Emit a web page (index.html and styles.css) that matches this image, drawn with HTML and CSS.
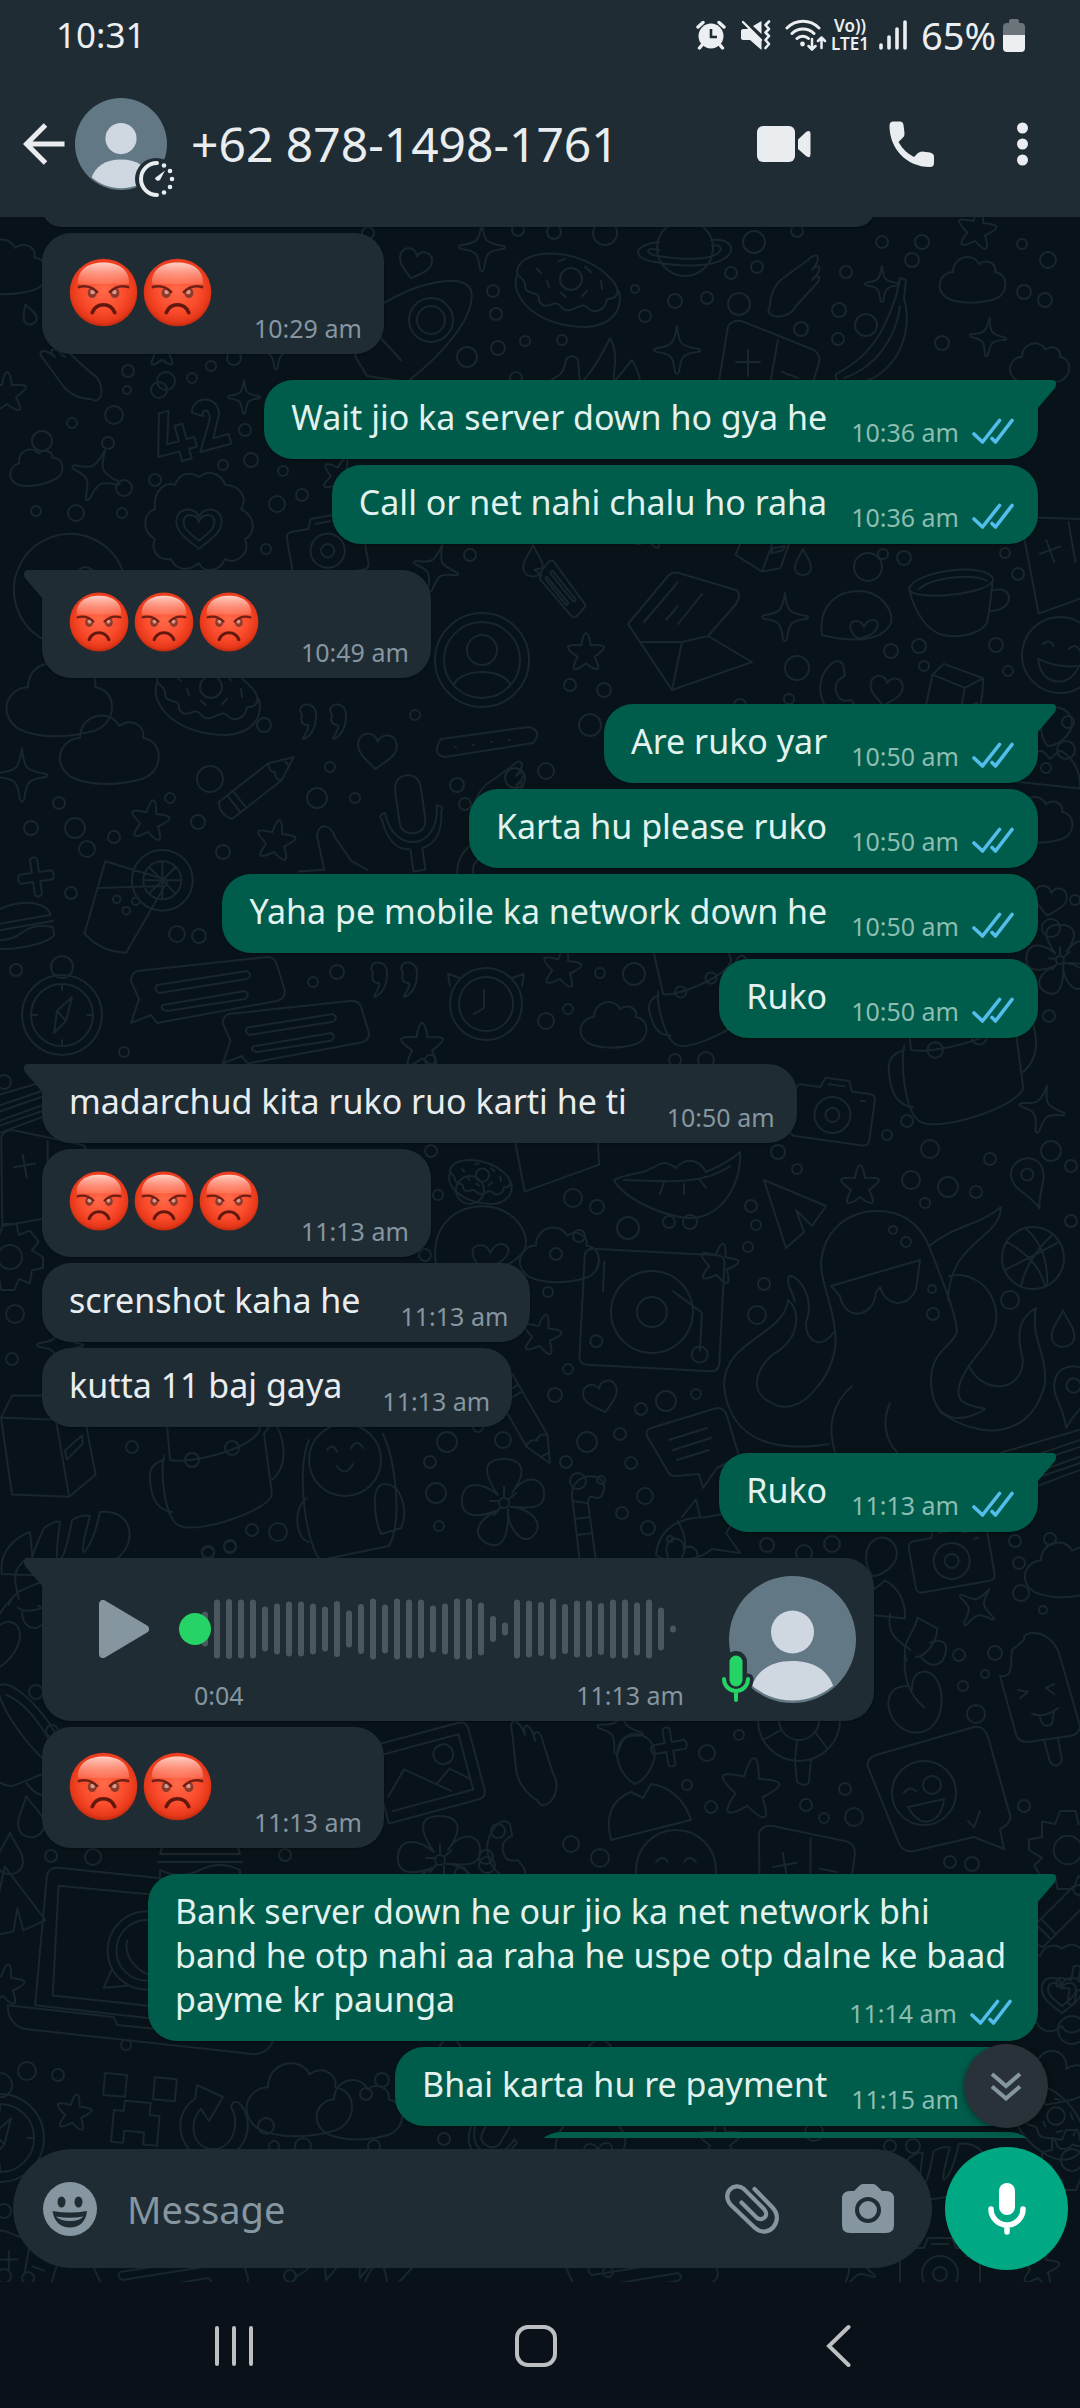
FILE: index.html
```
<!DOCTYPE html>
<html lang="en">
<head>
<meta charset="utf-8">
<meta name="viewport" content="width=device-width, initial-scale=1">
<title>+62 878-1498-1761</title>
<link rel="stylesheet" href="styles.css">
</head>
<body>
<svg class="sprite" aria-hidden="true">
  <defs>
    <radialGradient id="face" cx="50%" cy="46%" r="54%">
      <stop offset="0" stop-color="#ff6a4a"/>
      <stop offset="0.6" stop-color="#fa4c2c"/>
      <stop offset="0.88" stop-color="#e8381a"/>
      <stop offset="1" stop-color="#c02a0e"/>
    </radialGradient>
    <linearGradient id="shine" x1="0" y1="0" x2="0" y2="1">
      <stop offset="0" stop-color="#ffd9d0" stop-opacity="0.95"/>
      <stop offset="1" stop-color="#ff9a84" stop-opacity="0.35"/>
    </linearGradient>
    <symbol id="angry" viewBox="0 0 69 70">
      <circle cx="34.500" cy="35" r="34.300" fill="url(#face)"/>
      <path d="M8.500 25C8.500 11 20 4.500 34.500 4.500S60.500 11 60.500 25C60.500 28 52 26 34.500 26S8.500 28 8.500 25Z" fill="url(#shine)"/>
      <ellipse cx="23" cy="35.500" rx="4.600" ry="5.200" fill="#8b3a2c"/>
      <ellipse cx="46" cy="35.500" rx="4.600" ry="5.200" fill="#8b3a2c"/>
      <circle cx="23.500" cy="34.500" r="2.400" fill="#d99a8c"/>
      <circle cx="45.500" cy="34.500" r="2.400" fill="#d99a8c"/>
      <path d="M9.500 29.500C17 27.500 23 29.500 28 34.500M59.500 29.500C52 27.500 46 29.500 41 34.500" fill="none" stroke="#6e2016" stroke-width="2.600" stroke-linecap="round"/>
      <path d="M23 55.500C25.500 49.500 30 47.500 34.500 47.500S43.500 49.500 46 55.500" fill="none" stroke="#64170d" stroke-width="3.600" stroke-linecap="round"/>
    </symbol>
    <symbol id="ticks" viewBox="0 0 42 27">
      <path d="M2 16L10.500 24L27.500 2.500M20 20.500L23.500 24L40 2.500" fill="none" stroke="#53bdeb" stroke-width="3.600" stroke-linecap="round" stroke-linejoin="round"/>
    </symbol>
    <symbol id="person" viewBox="0 0 127 127">
      <clipPath id="disc"><circle cx="63.500" cy="61.500" r="63"/></clipPath>
      <circle cx="63.500" cy="63.500" r="63.500" fill="#637885"/>
      <circle cx="63.500" cy="56" r="21.500" fill="#cfd8e0"/>
      <path clip-path="url(#disc)" d="M22 112C28 94 42 85 63.500 85S99 94 105 112V127H22Z" fill="#cfd8e0"/>
    </symbol>
  </defs>
</svg>

<header class="top">
  <div class="status">
    <time class="clock">10:31</time>
    <svg class="alarm" viewBox="0 0 30 30" width="30" height="30" role="img" aria-label="Alarm"><circle cx="15" cy="16" r="12.500" fill="#eceff1"/><path d="M2 7L7 2.500M28 7L23 2.500M6 25L3.500 28M24 25L26.500 28" stroke="#eceff1" stroke-width="3.400" stroke-linecap="round"/><path d="M15 9V17H21" fill="none" stroke="#1f2c34" stroke-width="2.600"/></svg>
    <svg class="mute" viewBox="0 0 30 30" width="30" height="30" role="img" aria-label="Vibrate"><path d="M0 11C0 10 1 9 2 9H6L8 8L20.500 20V30L9 20H2C1 20 0 19 0 18ZM20.500 1V14L12 6Z" fill="#eceff1"/><path d="M2 2L20 20" stroke="#eceff1" stroke-width="2.400" stroke-linecap="round"/><path d="M28 1.500L24.500 5L28 9L24.500 12.500L28 16L24.500 20L28 24L24.500 28" fill="none" stroke="#eceff1" stroke-width="2.600" stroke-linecap="round" stroke-linejoin="round"/></svg>
    <svg class="wifi" viewBox="0 0 42 32" width="42" height="32" role="img" aria-label="Wi-Fi"><g fill="none" stroke="#eceff1" stroke-width="3" stroke-linecap="round" stroke-linejoin="round"><path d="M2 9C11 0 25 0 34 9M7 14.500C13 8.500 23 8.500 29 14.500M12 19.500C15 16.500 20.500 16.500 23.500 19.500"/><path d="M27 20V30M23.500 27L27 30.500L30.500 27M36.500 29V19M33 22L36.500 18.500L40 22" stroke-width="2.500"/></g><circle cx="17.500" cy="25" r="2.400" fill="#eceff1"/></svg>
    <span class="volte">Vo))<br>LTE1</span>
    <svg class="signal" viewBox="0 0 28 30" width="28" height="30" role="img" aria-label="Signal"><path d="M2 25V28M10 17V28M18 9V28M26 2V28" stroke="#eceff1" stroke-width="3.600" stroke-linecap="round"/></svg>
    <span class="charge">65%</span>
    <svg class="battery" viewBox="0 0 22 33" width="22" height="33" role="img" aria-label="Battery"><path d="M6 4V2Q6 0 8 0H14Q16 0 16 2V4H18Q22 4 22 8V16H0V8Q0 4 4 4Z" fill="#6b7478"/><path d="M0 16H22V29Q22 33 18 33H4Q0 33 0 29Z" fill="#eceff1"/></svg>
  </div>
  <div class="toolbar">
    <button class="icon back" type="button" aria-label="Back"><svg viewBox="0 0 42 42" width="42" height="42"><path d="M41.500 21H4M22.500 2L3.500 21L22.500 40" fill="none" stroke="#e9edef" stroke-width="5"/></svg></button>
    <div class="avatar">
      <svg width="92" height="92" viewBox="0 0 127 127" role="img" aria-label="Contact photo"><use href="#person"/></svg>
      <svg class="timer" viewBox="0 0 42 42" width="42" height="42" aria-hidden="true"><circle cx="21" cy="21" r="21" fill="#1f2c34"/><path d="M22 5A16 16 0 1 0 22 37" fill="none" stroke="#e9edef" stroke-width="4" stroke-linecap="round"/><g fill="#e9edef"><circle cx="29" cy="7.500" r="2.300"/><circle cx="35" cy="13" r="2.300"/><circle cx="37" cy="21" r="2.300"/><circle cx="35" cy="29" r="2.300"/><circle cx="29" cy="34.500" r="2.300"/><path d="M30 12.500L25 22A3 3 0 0 1 20 20Z"/></g></svg>
    </div>
    <h1 class="title">+62 878-1498-1761</h1>
    <button class="icon video" type="button" aria-label="Video call"><svg viewBox="0 0 54 36" width="54" height="36"><rect width="38" height="36" rx="6" fill="#e9edef"/><path d="M41 13.500L49 6Q53.500 3 53.500 8V28Q53.500 33 49 30L41 23Z" fill="#e9edef"/></svg></button>
    <button class="icon call" type="button" aria-label="Call"><svg viewBox="0 0 45 46" width="45" height="46"><path d="M4 0.500H11Q14 0.500 14.500 4L15.500 12Q16 15 13.500 17L9.500 21Q15 31 25 36L29 32Q31 30.500 33 30.500L41 31.500Q45 32.500 45 35.500V42Q45 46 41 46C17 46 0.500 27 0.500 5Q0.500 0.500 4 0.500Z" fill="#e9edef"/></svg></button>
    <button class="icon more" type="button" aria-label="More options"><svg viewBox="0 0 11 44" width="11" height="44"><g fill="#e9edef"><circle cx="5.500" cy="6" r="5.500"/><circle cx="5.500" cy="22" r="5.500"/><circle cx="5.500" cy="38" r="5.500"/></g></svg></button>
  </div>
</header>

<main class="conversation">
  <svg class="wallpaper" viewBox="0 217 1080 2065" preserveAspectRatio="xMidYMin slice" aria-hidden="true"></svg>

  <section class="chat" aria-label="Messages">
    <ol class="messages">
      <li class="received"><div class="bubble earlier"></div></li>
      <li class="received"><div class="bubble"><p class="emoji big"><svg role="img" aria-label="Angry face"><use href="#angry"/></svg><svg role="img" aria-label="Angry face"><use href="#angry"/></svg></p><span class="meta"><time>10:29 am</time></span></div></li>

      <li class="sent first"><div class="bubble"><p>Wait jio ka server down ho gya he</p><span class="meta"><time>10:36 am</time><svg class="ticks"><use href="#ticks"/></svg></span></div></li>
      <li class="sent"><div class="bubble"><p>Call or net nahi chalu ho raha</p><span class="meta"><time>10:36 am</time><svg class="ticks"><use href="#ticks"/></svg></span></div></li>

      <li class="received first"><div class="bubble"><p class="emoji"><svg role="img" aria-label="Angry face"><use href="#angry"/></svg><svg role="img" aria-label="Angry face"><use href="#angry"/></svg><svg role="img" aria-label="Angry face"><use href="#angry"/></svg></p><span class="meta"><time>10:49 am</time></span></div></li>

      <li class="sent first"><div class="bubble"><p>Are ruko yar</p><span class="meta"><time>10:50 am</time><svg class="ticks"><use href="#ticks"/></svg></span></div></li>
      <li class="sent"><div class="bubble"><p>Karta hu please ruko</p><span class="meta"><time>10:50 am</time><svg class="ticks"><use href="#ticks"/></svg></span></div></li>
      <li class="sent"><div class="bubble"><p>Yaha pe mobile ka network down he</p><span class="meta"><time>10:50 am</time><svg class="ticks"><use href="#ticks"/></svg></span></div></li>
      <li class="sent"><div class="bubble"><p>Ruko</p><span class="meta"><time>10:50 am</time><svg class="ticks"><use href="#ticks"/></svg></span></div></li>

      <li class="received first"><div class="bubble"><p>madarchud kita ruko ruo karti he ti</p><span class="meta"><time>10:50 am</time></span></div></li>
      <li class="received"><div class="bubble"><p class="emoji"><svg role="img" aria-label="Angry face"><use href="#angry"/></svg><svg role="img" aria-label="Angry face"><use href="#angry"/></svg><svg role="img" aria-label="Angry face"><use href="#angry"/></svg></p><span class="meta"><time>11:13 am</time></span></div></li>
      <li class="received"><div class="bubble"><p>screnshot kaha he</p><span class="meta"><time>11:13 am</time></span></div></li>
      <li class="received"><div class="bubble"><p>kutta 11 baj gaya</p><span class="meta"><time>11:13 am</time></span></div></li>

      <li class="sent first"><div class="bubble"><p>Ruko</p><span class="meta"><time>11:13 am</time><svg class="ticks"><use href="#ticks"/></svg></span></div></li>

      <li class="received first"><div class="bubble voice">
        <button class="icon play" type="button" aria-label="Play"><svg viewBox="0 0 50 58" width="50" height="58"><path d="M4 4V54L46 29Z" fill="#8696a0" stroke="#8696a0" stroke-width="8" stroke-linejoin="round"/></svg></button>
        <div class="track">
          <div class="scrub">
            <svg class="wave" viewBox="0 0 474 64" width="474" height="64" aria-hidden="true"></svg>
            <input type="range" min="0" max="100" value="0" aria-label="Playback position">
          </div>
          <div class="times"><span>0:04</span><time>11:13 am</time></div>
        </div>
        <div class="speaker">
          <svg width="127" height="127" viewBox="0 0 127 127" role="img" aria-label="Contact photo"><use href="#person"/></svg>
          <svg class="voicemic" viewBox="0 0 38 58" width="38" height="58" aria-hidden="true"><g fill="none" stroke-linecap="round"><path d="M19 15V33" stroke="#1f2c34" stroke-width="22"/><path d="M7 32A12 12 0 0 0 31 32M19 45V52" stroke="#1f2c34" stroke-width="11"/><path d="M19 15V33" stroke="#25d366" stroke-width="13"/><path d="M7 32A12 12 0 0 0 31 32M19 45V53" stroke="#25d366" stroke-width="4"/></g></svg>
        </div>
      </div></li>
      <li class="received"><div class="bubble"><p class="emoji big"><svg role="img" aria-label="Angry face"><use href="#angry"/></svg><svg role="img" aria-label="Angry face"><use href="#angry"/></svg></p><span class="meta"><time>11:13 am</time></span></div></li>

      <li class="sent first"><div class="bubble long"><p>Bank server down he our jio ka net network bhi band he otp nahi aa raha he uspe otp dalne ke baad payme kr paunga<span class="meta"><time>11:14 am</time><svg class="ticks"><use href="#ticks"/></svg></span></p></div></li>
      <li class="sent"><div class="bubble"><p>Bhai karta hu re payment</p><span class="meta"><time>11:15 am</time><svg class="ticks"><use href="#ticks"/></svg></span></div></li>
      <li class="sent"><div class="bubble later"></div></li>
    </ol>
    <button class="icon jump" type="button" aria-label="Scroll to latest"><svg viewBox="0 0 32 30" width="32" height="30"><path d="M2 3L16 15L30 3M2 15.500L16 27.500L30 15.500" fill="none" stroke="#8696a0" stroke-width="4"/></svg></button>
  </section>

  <form class="composer">
    <div class="field">
      <button class="icon" type="button" aria-label="Emoji"><svg viewBox="0 0 54 54" width="54" height="54"><circle cx="27" cy="27" r="27" fill="#8696a0"/><ellipse cx="18.500" cy="20" rx="4" ry="5.500" fill="#1f2c34"/><ellipse cx="35.500" cy="20" rx="4" ry="5.500" fill="#1f2c34"/><path d="M9.500 29Q27 32 44 29C43 40 36 45.500 27 45.500S11 40 9.500 29Z" fill="#1f2c34"/><path d="M13 34.500Q27 37 40.500 34.500Q36 39 27 39T13 34.500Z" fill="#8696a0"/></svg></button>
      <input class="text" type="text" placeholder="Message" aria-label="Message">
      <button class="icon attach" type="button" aria-label="Attach"><svg viewBox="0 0 54 50" width="54" height="50"><path d="M29.500 5L47.500 23.500C60 37 43 56 29.500 43.500L5.500 20.500C-4 9 9 -3 19 5L39 25C45 32 37 38 31.500 33.500L16.500 18.500" fill="none" stroke="#8696a0" stroke-width="4.200" stroke-linecap="round"/></svg></button>
      <button class="icon camera" type="button" aria-label="Camera"><svg viewBox="0 0 52 49" width="52" height="49"><path d="M17 2Q19 0 21 0H31Q33 0 35 2L40 7H44Q52 7 52 15V41Q52 49 44 49H8Q0 49 0 41V15Q0 7 8 7H12Z" fill="#8696a0"/><circle cx="26" cy="26" r="11" fill="#8696a0" stroke="#1f2c34" stroke-width="4"/></svg></button>
    </div>
    <button class="icon record" type="button" aria-label="Record voice message"><svg viewBox="0 0 38 54" width="38" height="54"><path d="M19 9V25" stroke="#fff" stroke-width="16" stroke-linecap="round"/><path d="M3 27A16 16 0 0 0 35 27M19 43V50" fill="none" stroke="#fff" stroke-width="5.500" stroke-linecap="round"/></svg></button>
  </form>
</main>

<nav class="system" aria-label="System">
  <button class="icon" type="button" aria-label="Recents"><svg viewBox="0 0 40 42" width="40" height="42"><path d="M3 3V39M20 3V39M37 3V39" stroke="#bdbfc1" stroke-width="4" stroke-linecap="round"/></svg></button>
  <button class="icon" type="button" aria-label="Home"><svg viewBox="0 0 42 42" width="42" height="42"><rect x="2" y="2" width="38" height="38" rx="11" fill="none" stroke="#bdbfc1" stroke-width="4"/></svg></button>
  <button class="icon" type="button" aria-label="Back"><svg viewBox="0 0 26 44" width="26" height="44"><path d="M23.500 3L4 22L23.500 41" fill="none" stroke="#bdbfc1" stroke-width="4" stroke-linecap="round"/></svg></button>
</nav>
<script src="chat.js"></script>
</body>
</html>
```
FILE: styles.css
```
* { box-sizing: border-box; }

body {
  margin: 0;
  height: 100vh;
  display: flex;
  flex-direction: column;
  overflow: hidden;
  background: #071318;
  color: #e9edef;
  font-family: "Noto Sans", "Open Sans", sans-serif;
}

svg { display: block; flex: none; }
.sprite { position: absolute; width: 0; height: 0; }

.icon {
  display: flex;
  align-items: center;
  justify-content: center;
  flex: none;
  margin: 0;
  padding: 0;
  border: 0;
  background: none;
}

/* Header */
.top { flex: none; background: #1f2c34; }

.status {
  display: flex;
  align-items: center;
  height: 70px;
  padding: 0 55px 0 56px;
  color: #eceff1;
}
.clock { flex: 1; font-size: 35px; line-height: 44px; }
.mute { margin-left: 15px; }
.wifi { margin-left: 14px; }
.volte {
  margin: 0 10px 0 4px;
  font-size: 17px;
  font-weight: 600;
  line-height: 18px;
  text-align: center;
}
.charge { margin: 0 7px 0 14px; font-size: 38px; line-height: 44px; }

.toolbar {
  display: flex;
  align-items: center;
  min-height: 147px;
  padding: 0 52px 0 23px;
}
.avatar { position: relative; margin: 0 24px 0 10px; }
.timer { position: absolute; right: -10px; bottom: -10px; }
.title {
  flex: 1;
  margin: 0;
  font-size: 48px;
  font-weight: 400;
  line-height: 60px;
  white-space: nowrap;
}
.call { margin: 0 83px 0 78px; }

/* Conversation */
.conversation {
  position: relative;
  flex: 1;
  min-height: 0;
  display: flex;
  flex-direction: column;
}
.wallpaper {
  position: absolute;
  inset: 0;
  width: 100%;
  height: 100%;
  fill: none;
  stroke: #19262c;
  stroke-width: 2;
  stroke-linecap: round;
  stroke-linejoin: round;
}
.wallpaper path { vector-effect: non-scaling-stroke; }

.chat { position: relative; flex: 1; min-height: 0; overflow: hidden; }
.messages {
  display: flex;
  flex-direction: column;
  gap: 6px;
  margin: 0;
  padding: 0 42px;
  list-style: none;
}
.messages li { display: flex; }
.sent { justify-content: flex-end; }
.first { margin-top: 20px; }

.bubble {
  position: relative;
  display: flex;
  align-items: flex-end;
  border-radius: 29px;
  background: #1f2c34;
  box-shadow: 0 1px 2px rgba(0, 0, 0, 0.3);
}
.sent .bubble { background: #005c4b; color: #e2f2ee; }
.received.first .bubble { border-top-left-radius: 0; }
.sent.first .bubble { border-top-right-radius: 0; }
.first .bubble::before {
  content: "";
  position: absolute;
  top: 0;
  width: 20px;
  height: 30px;
  background: inherit;
}
.received.first .bubble::before {
  left: -19px;
  clip-path: path("M20 0H4Q-1 1 2 8L20 29Z");
}
.sent.first .bubble::before {
  right: -19px;
  clip-path: path("M0 0H16Q21 1 18 8L0 29Z");
}

.bubble p {
  margin: 0;
  padding: 15px 0 20px 27px;
  font-size: 34px;
  line-height: 44px;
}
.meta {
  display: flex;
  align-items: center;
  gap: 13px;
  padding: 0 22px 14px 40px;
  color: #8696a0;
  font-size: 25px;
  line-height: 24px;
  white-space: nowrap;
}
.sent .meta { padding: 0 24px 14px 24px; color: #8cbdb1; }
.ticks { width: 42px; height: 27px; }

.bubble .emoji { display: flex; gap: 5px; padding: 22px 2px 26px 27px; }
.emoji svg { width: 60px; height: 60px; }
.bubble .big { padding: 25px 2px 27px 27px; }
.big svg { width: 69px; height: 69px; }

/* The time sits at the end of the last line */
.long { display: block; max-width: 890px; }
.bubble.long p { padding-right: 26px; }
.sent .long .meta { float: right; margin-top: 22px; padding: 0; }

.earlier { width: 833px; height: 38px; margin-top: -28px; }
.later { width: 506px; height: 79px; }

/* Voice message */
.voice { align-items: flex-start; padding: 0 18px 0 57px; }
.play { height: 64px; margin: 39px 30px 0 0; }
.track { width: 513px; padding: 39px 0 14px; }
.scrub { display: grid; align-items: center; }
.scrub > * { grid-area: 1 / 1; }
.wave { margin-left: 23px; fill: none; stroke: #4b565e; stroke-width: 6; stroke-linecap: round; }
.scrub input {
  position: relative;
  width: 100%;
  height: 64px;
  margin: 0;
  background: none;
  appearance: none;
}
.scrub input::-webkit-slider-thumb {
  width: 32px;
  height: 32px;
  border-radius: 50%;
  background: #25d366;
  appearance: none;
}
.times {
  display: flex;
  justify-content: space-between;
  margin-top: 22px;
  padding: 0 8px 0 15px;
  color: #8696a0;
  font-size: 25px;
  line-height: 24px;
}
.speaker { position: relative; margin: 18px 0 0 37px; }
.voicemic { position: absolute; left: -12px; bottom: -2px; }

.jump {
  position: absolute;
  right: 32px;
  bottom: 10px;
  width: 84px;
  height: 84px;
  border-radius: 50%;
  background: #293239;
  box-shadow: 0 2px 6px rgba(0, 0, 0, 0.4);
}

/* Composer */
.composer {
  position: relative;
  flex: none;
  display: flex;
  align-items: center;
  gap: 13px;
  padding: 9px 12px 12px 13px;
}
.field {
  flex: 1;
  min-width: 0;
  display: flex;
  align-items: center;
  height: 119px;
  padding: 0 38px 0 30px;
  border-radius: 60px;
  background: #1f2c34;
}
.text {
  flex: 1;
  min-width: 0;
  margin: 0 30px;
  padding: 0;
  border: 0;
  outline: 0;
  background: none;
  color: #e9edef;
  font: 38px/48px "Noto Sans", "Open Sans", sans-serif;
}
.text::placeholder { color: #8696a0; opacity: 1; }
.camera { margin-left: 63px; }
.record {
  width: 123px;
  height: 123px;
  border-radius: 50%;
  background: #00a884;
}

/* System navigation */
.system {
  flex: none;
  display: grid;
  grid-template-columns: repeat(3, 1fr);
  padding: 42px 91px 40px 83px;
  background: #0a1118;
}
.system .icon { height: 44px; }
```
FILE: chat.js
```
// Doodle outlines, drawn around their own centre.
const ring = (x, y, r) => `M${x - r} ${y}a${r} ${r} 0 1 0 ${2 * r} 0a${r} ${r} 0 1 0 ${-2 * r} 0`;
const shapes = {
  heart: "M0 16C-6 10-18 4-16-6C-14-15-3-15 0-7C3-15 14-15 16-6C18 4 6 10 0 16Z",
  star: "M0-20Q3-20 5-7Q19-8 19-5Q19-2 9 5Q15 17 12 18Q9 19 0 12Q-9 19-12 18Q-15 17-9 5Q-19-2-19-5Q-19-8-5-7Q-3-20 0-20Z",
  sparkle: "M0-24C2-6 3-4 22-1C24 0 23 2 20 2C6 4 4 6 2 22C1 25-1 25-2 22C-4 6-6 4-20 2C-24 1-24-1-20-2C-5-4-3-6 0-24Z",
  plus: "M-4-20Q0-24 4-20V-5H18Q22 0 18 5H4V20Q0 24-4 20V5H-18Q-22 0-18-5H-4Z",
  drop: "M0-14C4-5 9-1 8 6C6 14-6 14-8 6C-9-1-4-5 0-14Z",
  cloud: "M-26 18C-40 8-32-8-20-8C-20-24 0-28 6-16C14-22 24-16 22-8C36-6 36 14 22 19C6 24-14 24-26 18Z",
  donut: "M-50-16C-46-40 10-40 40-12C54 0 54 12 40 12C38 24 26 28 20 20C12 14 4 30-6 20C-12 10-22 26-28 14C-26 2-42 10-42-2C-42-10-50-8-50-16ZM-50-12C-58 10-30 40 20 40C46 38 56 22 52 4" + ring(4, -8, 11) + "M-30-18l4 4M-8-26l6-2M18-20l6 5M34-6l1 8M-20-6l2 6M-6 6l5 4M20 4l-5 5",
  planet: ring(0, -2, 28) + "M-26-8C-50-6-56 8-30 12C0 18 30 16 40 8C52 0 46-12 26-10M-26 0C-40-4-40 4-28 6C0 10 22 10 32 4C40-2 34-6 27-4",
  hand: "M-26 22C-34 34-8 38 0 22L22-2C26-8 20-10 16-4C28-16 24-22 16-14C26-26 22-34 12-24L-10-8C-20-2-26 10-26 22Z",
  badge: "M0-46C12-56 24-46 26-38C44-38 48-22 42-14C58-6 56 12 46 16C52 32 36 42 26 36C20 50 4 50 0 40C-12 50-24 46-28 36C-44 38-48 24-44 16C-58 8-56-10-44-14C-46-32-34-42-24-38C-20-50-8-52 0-46ZM0 26C-8 18-26 10-22-6C-18-16-4-16 0-6C4-16 18-16 22-6C26 10 8 18 0 26ZM0 18C-6 12-18 6-15-4C-12-10-2-9 0-1C2-9 12-10 15-4C18 6 6 12 0 18Z",
  camera: "M-34-22H-16L-12-32H12L16-22H34Q40-22 40-16V24Q40 30 34 30H-34Q-40 30-40 24V-16Q-40-22-34-22ZM-8-26H8M26-14H30" + ring(0, 4, 18) + ring(0, 4, 7),
  face: ring(0, 0, 40) + "M-20-8Q-14-16-8-8M8-8Q14-16 20-8M-22 8Q0 14 22 8Q16 28 0 28T-22 8Z",
  user: ring(0, 0, 47) + ring(0, 0, 38) + ring(0, -10, 15) + "M-28 24C-20 8 20 8 28 24",
  clock: ring(0, 0, 36) + ring(0, 0, 27) + "M-2-14V4L-12 10M-26-26L-38-30L-36-18M26-26L38-30L36-18",
  compass: ring(0, 0, 40) + ring(0, 0, 31) + ring(0, -48, 11) + "M10-18L4 6L-8 18L-5-4ZM-5-4L4 6M0-31V-25M0 31V25M-31 0H-25M31 0H25",
  envelope: "M-60-4L-20-52Q-14-58-6-54L48-38Q54-34 48-24L20 8L64 34L-16 62L-48 14ZM-48 14L-6 14L20 8M-6 14L-16 62M-44-6L-10-46M-10-4L14-34M-22-8L-10-22",
  cup: "M-44-16C-40-34 34-44 40-26C42-12-40-2-44-16C-38 8-26 26-10 30C8 34 28 28 34 18C36 8 38-8 40-26M38-14C60-22 64 4 38 6M-34-16C-20-28 20-32 34-24",
  whale: "M-34 18C-38-12-18-26 2-26C26-26 40-4 34 8C24 24-2 26-34 18M2 22C-8 14-8 4 0 4Q6 4 8 10C12 0 22 2 22 8C20 18 8 20 2 22Z",
  phone: "M-12-26C-34-6-20 32 10 30Q18 28 14 18L8 10Q0 12-4 8C-10-2-8-10 2-14L0-26Q-6-32-12-26Z",
  pencil: "M-46-12H24L50 0L24 12H-46Q-54 0-46-12ZM24-12Q18-4 24 0Q18 6 24 12M-34-12V12M-26-12V12M40-5V5",
  mic: "M-13-34Q-13-50 0-50T13-34V-6Q13 8 0 8T-13-6ZM-30-10Q-34-14-26-16C-24 28 24 28 26-16Q34-14 30-10C28 12 20 22 6 24V46H-6V24C-20 22-28 12-30-10Z",
  quotes: "M-22-10C-30-22-8-26-8-10C-8 6-16 12-20 14C-24 14-14 6-16 0C-22 0-24-4-22-10ZM8-10C0-22 22-26 22-10C22 6 14 12 10 14C6 14 16 6 14 0C8 0 6-4 8-10Z",
  drink: "M-26-46L40-26L-4 50Q-30 50-48 30ZM-34-18L34-20" + ring(34, -26, 32) + ring(34, -26, 20) + "M34-46V-6M14-26H54M20-40L48-12M48-40L20-12" + ring(-14, -6, 4) + ring(-4, 6, 4) + ring(6, -4, 4),
  talk: "M-70-22L60-36Q68-36 70-28L78-2Q78 6 70 8L-50 30L-56 22L-76 30L-68 6L-76-12Q-76-20-70-22ZM-50-8L40-22Q46-18 40-14L-48 0Q-54-4-50-8ZM-44 12L38-2Q44 2 38 6L-40 18Q-48 16-44 12Z",
  pill: "M-44-6L44-18Q58-14 48-2L-40 12Q-54 10-44-6M-30 2h1M-12 0h1M6-3h1M24-5h1",
  thumb: "M-40 24L-12 22L-20-16C-18-32-4-28 0-14L18 12L36 22",
  gear: ring(0, 0, 11) + "M-6-30H6L8-20L18-24L26-14L20-6L30 0V10L20 12L18 24L8 20L4 30H-8L-10 20L-20 22L-26 12L-20 6L-30 0V-8L-20-10L-20-22L-10-20Z",
  frame: "M-46-34H38Q46-34 46-26V30Q46 38 38 38H-46ZM-40-24H36V28H-40M-40 14L-20-6L16 24M6 14L20 4L36 18" + ring(18, -10, 9),
  deck: "M-62-58H62Q70-58 70-50V50Q70 58 62 58H-62Q-70 58-70 50V-50Q-70-58-62-58ZM-50-46V-16M20-20L50 0V38" + ring(0, 2, 41) + ring(0, 2, 15) + ring(50, 42, 8) + ring(-54, 34, 6),
  cursor: "M-28-34L34-8L20 12L4-4L12 18L-6 34Z",
  pin: "M0 28C-6 8-18 4-16-12C-12-28 12-28 16-12C18 4 6 8 0 28Z" + ring(0, -8, 6),
  ball: ring(0, 0, 31) + "M-26-16Q6 2 12 28M-28 12Q0-2 26-16M-8-30Q16-10 14 28M-12 28Q-6 0 20-24",
  flower: ring(0, 0, 5) + "M-6-8C-28-40-12-44 0-44S28-38 8-10C22-32 42-24 40-8C40 8 20 4 10 4C36 10 38 26 28 34C18 42 6 26 4 12C4 34-2 48-18 40C-34 30-24 16-8 8C-24 14-44 16-42-4C-40-24-20-20-6-8M0-16V-6M12-10L5-4M14 4H6M4 16V6M-10 12L-4 5M-14-2H-5",
  lips: "M-66 0C-50-8-40-4-24-14C-16-20-10-16-4-12C6-24 20-20 26-8C40-14 52-20 60-28C62 0 44 40 6 38C-24 34-58 16-66 0ZM-56 0C-30 0 20 8 50-14M-16 2L-20 14M4 4V14M20 0L26 8",
  laptop: "M-92-96Q-90-106-78-104L120-84L108 60L-104 36ZM-80-86L110-68L100 46L-86 26L-80-86ZM-132 36L-24 48L-20 56L40 62L44 56L140 66Q138 84 120 86L-116 60Q-132 54-132 36Z" + ring(10, -20, 40) + ring(10, -20, 31) + "M-26 0L-34 18L-10 16M-10-30C-14-14 0 2 16 6",
  invader: "M-36-34H-14V-12H-36ZM14-34H36V-12H14ZM-14-8H12V4H22V34H8V22H-12V34H-24V2H-14Z",
  refresh: "M-18-26C-44-10-34 34 0 34C34 34 44-4 26-22Q20-26 18-18C28-2 20 24 0 24C-20 24-26-2-12-16L-4-4L10-28L-16-40Z",
  carton: "M-40-24L-30-44L30-44L36-24L46 28L22 48L-30 46ZM-40-24L10-22L22 48M10-22L30-44M18 6L34-8V0L20 14Z",
  bag: "M-46-70L44-66L50-30C40-10-20 4-40 0ZM-46-4C-50 10-46 60-30 66C-10 74 60 50 62 34L54-26M-46 0Q-62 4-60 20Q-58 50-38 52M54-26Q66-46 72-20T62 20" + ring(-18, 0, 7) + ring(22, -12, 7),
  child: ring(0, -30, 36) + "M-36-50C-50-20-38 60-24 70L44 56C58 30 50-30 38-56M-18-40Q-12-48-8-38M6-42Q12-52 18-42M-8-24Q0-12 8-26M40-6C24-6 30 30 36 44L56 38C64 20 56-6 40-6M-38 8C-54 20-48 50-36 52",
  bread: "M-66 44C-70 20-50 6-38 2Q-34 40-36 34T-24-2Q-12-10-8-8Q-14 36-8 30T4-10Q14-16 22-14Q10 30 18 20T32-18C54-20 66-6 60 14C50 40 10 48-66 44Z",
  chat: "M-44-24L22-44Q30-44 32-36L44 4L22 16L8 36L4 22L-20 24Q-26 24-28 18L-48-16Q-50-22-44-24ZM-26-12L12-24M-22-2L16-14M-18 8L14-2",
  cane: "M-10 40L-18-28C-18-52 16-52 14-34Q12-22 4-26Q-2-28-2-20L6 38M-18-22L-3-20M-15-4L0-6M-13 12L3 10",
  fish: "M-40 22C-38-2-20-16 10-16L44-22L30 0L44 20L16 16C0 30-30 30-40 22ZM-14-16L0-34L4-16M-18-12Q-6 10-14 24" + ring(-26, 6, 3),
  ice: "M-24-40L-12-50C-14-60 10-62 22-40L44 36Q44 44 34 46L-8 52Q-18 52-20 44L-36-14C-22-12-26-26-24-40M8 50L14 72Q22 80 26 70L22 48M-18 0L-8 2L-16 8M18-6L10-2L18 4M-4 24Q10 28 22 18M4 26Q6 40 16 34L18 22",
  wink: "M-58-38L40-66Q50-68 54-56L76 22Q78 30 66 36L70 56L40 44L-20 58Q-32 60-36 48L-66-26Q-68-34-58-38Z" + ring(-10, 0, 32) + ring(-2, -8, 9) + "M-30 0Q-24-8-18-2M-26 14L10 6Q8 24-4 28T-26 14M34 28L40 34L46 18",
  sprout: "M-6 12C-14-8 4-20 6-36L28-24C28-8 14 8 4 8M-24-40C-30-14-10-8-2 0M20-8C34-14 44-8 34 12C26 20 16 16 10 8M-8 4C-10 30-4 50 14 64M-6 40C-40 40-28 92 6 92C40 90 40 30 16 24C2 24 0 34 0 44",
  float: ring(0, 0, 41) + ring(0, 0, 20) + "M-36 20L-18 10M-2 20L-4 41M16 12L28 28M-4 41L-2 62Q6 68 10 62L12 40",
  bust: "M-18-20C-18-50 18-48 20-22C18-4 6 6 0 8C-8 4-16-6-18-20ZM-4 16L8 22L16 8C34 10 50 24 56 44L-24 64C-30 40-24 24-4 16Z",
  burger: "M-40-6C-36-34 36-34 40-6ZM-42 2H42M-40 10Q-20 20 0 10T40 10V20Q30 28 0 28T-40 20Z",
  flame: "M-54 36C-40 0-34 24-28-4C-26-8-20-10-16-4L-14 20C0 6 8-10 16-26C26-8 18 8 20 18L38-4C46 8 48 22 48 36",
  banana: "M-52 40C-20 24-4 0 8-38L12-56L18-54L16-36C28 6 0 52-42 50Q-54 48-52 40ZM-44 44C-14 34 8 6 12-28",
  sheet: "M-36-44Q-30-52-20-48L50-20Q58-14 54-4L36 54H-52ZM-16-20V6M-28-8H-4M14-30L6 14M18 2L34 8",
  rocket: "M-48-10C-10-34 36-44 44-26C50 0 14 40-20 66L-60 60L-72 40ZM-52 16L-26 44" + ring(4, 4, 22) + ring(4, 4, 14),
  number: "M-30 20H-8V30H2V20H10V10H2V-6H-6V10H-18L-8-22H-18ZM14-14C18-30 44-26 40-6L28 16H44V26H12L30-4C32-14 24-16 24-8Z",
  octopus: "M835 1331C832 1300 821 1285 821 1263C824 1228 850 1211 877 1211C903 1211 920 1225 929 1246C942 1280 955 1310 957 1331C955 1345 931 1350 931 1380C932 1430 970 1420 985 1409C970 1405 950 1405 962 1378C975 1350 1000 1340 996 1310C990 1280 965 1272 949 1276M929 1246C955 1225 980 1225 1001 1207C1000 1240 950 1240 948 1300M835 1331C838 1350 830 1372 818 1386C800 1410 781 1410 770 1402C745 1390 760 1360 780 1350C800 1335 800 1310 788 1300C785 1335 724 1340 724 1385C728 1430 760 1455 829 1444M835 1331C820 1352 805 1340 806 1322C815 1300 800 1275 789 1276C786 1285 792 1290 795 1302M940 1412C980 1440 1030 1440 1045 1384C1047 1350 1030 1340 1036 1308C1015 1320 1018 1340 1023 1360C1022 1392 985 1395 970 1368M852 1386C830 1405 828 1430 835 1452M890 1403C882 1420 885 1440 897 1452M831 1286L920 1260L916 1290C905 1310 885 1305 880 1287L876 1292C874 1318 845 1322 840 1296Z" + ring(893, 1230, 4) + ring(906, 1242, 5) + ring(933, 1314, 6) + ring(932, 1289, 4)
};

// name, x, y, scale, rotation
const placed = `rocket 427 316 1 0|heart 415 263 1 15|sparkle 482 247 1 0|donut 567 287 1 0|planet 685 250 1 0|hand 796 284 1 0|sparkle 882 284 .75 0|cloud 973 280 1 0|
banana 888 334 1 0|sparkle 988 337 .8 5|sheet 764 370 1 0|sparkle 677 350 1 0|flame 594 364 1 0|cloud 1040 364 .9 0|star 977 229 1 10|hand 69 373 1 -90|number 182 430 1 -15|sparkle 244 397 .7 0|sparkle 96 475 1.1 20|cloud 36 467 .8 -10|badge 199 523 1 0|camera 327 547 .95 -10|
sparkle 436 568 1 15|user 482 660 1 0|face 70 590 1.4 -20|star 7 392 1 0|cloud 8 267 1.2 0|drop 29 315 .8 -20|star 340 475 .9 20|star 162 350 .8 0|sparkle 276 350 .8 0|drop 533 562 1.2 0|talk 380 500 .6 0|
envelope 688 628 1 0|sparkle 785 617 1 0|whale 856 617 1 0|cup 953 605 1 0|face 1060 655 .95 10|sheet 1066 552 .9 -20|star 586 652 .95 0|phone 843 690 1 0|heart 886 690 1 10|carton 953 700 .7 20|drop 803 563 1 0|carton 765 540 .6 30|star 650 530 .9 10|talk 560 590 .4 60|
star 562 967 1 10|cloud 614 1025 1 0|bag 695 990 .8 -8|sparkle 22 775 1.1 0|cloud 60 700 1.6 0|cloud 110 750 1.5 0|donut 207 695 1 0|quotes 324 725 1 0|pencil 258 785 .9 -38|heart 377 750 1.2 5|pill 485 745 1 0|mic 413 825 1 -8|star 150 820 1 10|star 276 840 1 10|drink 130 905 .95 0|plus 36 877 .9 -8|thumb 335 850 .9 0|compass 62 1015 1 0|
talk 207 993 1 0|talk 295 1035 .95 0|quotes 395 983 1 0|clock 486 1004 1 0|star 422 1045 1.1 0|gear 10 1257 1.1 0|burger 20 925 .8 -10|phone 480 870 1 20|sparkle 560 830 1 0|hand 500 790 1 0|cloud 1040 820 1 0|bust 1050 740 .8 20|heart 1050 900 1 10|flower 1060 960 .8 0|
camera 833 1111 1 8|bag 955 1050 1.1 0|sparkle 1042 1109 1 12|lips 680 1180 1 0|star 860 1185 1 0|pin 1030 1182 1 -20|cursor 792 1214 1 0|ball 1033 1258 1 0|deck 652 1310 1 3|star 719 1263 1 12|octopus 0 0 1 0|star 542 1334 1 12|heart 601 1396 1.05 -15|chat 695 1452 1 0|flower 504 1503 1 0|cane 590 1523 1 0|fish 696 1533 1 0|sheet 552 1130 .9 -20|
whale 480 1240 1.3 0|donut 480 1180 .6 0|cloud 560 1255 1.2 0|pencil 525 1420 1 60|talk 20 1110 .7 -10|sheet 40 1170 .9 -10|star 545 1120 .9 0|drop 1063 1330 1.4 0|pin 1072 1395 1.2 10|talk 1060 1460 .8 -10|carton 45 1444 1.1 0|bag 210 1460 1 0|child 345 1490 1 0|bread 68 1530 1 0|sparkle 60 1345 1 0|
sprout 20 1600 .9 40|cup 10 1740 1.2 60|frame 427 1770 1.1 -15|hand 530 1760 1.2 -60|drop 30 1818 1.6 -10|drop 10 1855 1.6 0|camera 951 1557 1 -10|sparkle 977 1607 .9 35|sprout 912 1650 .9 0|ice 1036 1690 1 0|wink 934 1793 1 0|star 750 1788 1.5 8|bust 635 1776 1 0|plus 669 1747 .9 -10|face 676 1870 1 0|sheet 802 1870 1 -10|float 799 1720 1 0|gear 1068 1850 1.3 0|heart 680 1555 1 30|bust 875 1570 .8 20|cloud 1065 1570 1.2 0|
laptop 137 1970 .98 0|star 5 1984 1 10|cursor 12 1910 1 30|compass 0 2138 1.1 0|star 74 2112 .9 10|invader 138 2110 1 5|refresh 213 2125 1 0|cloud 300 2100 1.6 0|cloud 360 2110 1.3 0|mic 490 2140 .8 30|whale 590 2140 1 0|star 720 2140 1.1 0|badge 1062 1990 .9 0|plus 1074 1985 .9 10|heart 1060 2080 1.8 30|donut 1050 2120 .8 30|pencil 1065 1910 .9 -45|gear 1072 2160 1 0|
bread 930 2160 .9 0|camera 940 2270 1 0|talk 170 2280 1 0|talk 640 2275 1 0|sparkle 857 2266 .9 30|hand 390 2270 1 0|flame 340 2260 1 0|star 1040 2266 1 10|sheet 20 2265 .7 0|flower 440 1860 1 0|burger 200 1860 1 0|phone 510 1850 1 0|star 410 1370 1 0|sparkle 620 1730 1 10`;

const rings = `42 441 10,166 381 9,72 423 5,114 415 9,128 371 6,127 390 4,108 443 6,159 390 8,192 378 5,211 366 5,234 358 7,245 430 6,251 460 7,223 465 5,155 480 6,124 488 8,76 513 8,36 511 5,122 513 5,277 504 8,302 495 6,266 549 5,283 471 5,470 555 6,493 291 6,496 314 6,525 341 5,498 348 7,467 357 10,516 378 6,562 340 5,635 289 4,645 316 6,675 301 7,707 298 6,739 304 11,754 242 11,731 273 6,757 267 6,797 231 6,846 272 6,839 310 7,866 325 11,801 329 7,838 339 6,942 343 7,1024 292 7,1045 300 7,1048 260 8,912 260 7,922 242 7,882 242 6,1022 244 5,605 233 12,554 232 7,518 230 6,368 233 6,
797 668 12,868 567 14,883 554 5,904 558 7,1005 553 5,1018 574 6,891 651 7,919 646 7,924 666 5,996 645 7,1008 671 5,570 685 6,604 690 7,789 699 5,590 725 11,740 705 6,1068 722 6,1066 750 9,1046 768 5,546 771 8,600 973 5,634 974 11,568 1009 5,546 1021 8,1051 928 9,1049 1016 6,1075 900 5,210 779 13,264 725 7,330 767 5,317 798 10,355 798 5,198 822 7,223 852 7,170 798 5,59 803 6,31 828 7,75 828 10,114 837 6,87 849 8,71 893 6,177 934 8,199 936 7,16 970 6,124 1052 5,313 982 5,337 972 7,515 778 10,457 785 7,465 804 6,415 715 5,4 1082 7,
675 1060 6,706 1060 8,778 1152 7,797 1169 5,887 1135 5,907 1121 6,930 1149 9,990 1159 6,1051 1151 10,1071 1166 6,911 1180 9,948 1187 10,976 1192 6,925 1203 5,1071 1221 6,573 1198 9,597 1207 7,669 1222 6,690 1222 7,628 1228 11,579 1236 6,556 1254 6,751 1206 6,756 1225 5,748 1247 5,764 1284 6,757 1315 9,548 1292 5,1010 1300 9,568 1369 5,555 1395 7,641 1409 6,666 1401 10,696 1394 5,587 1442 10,620 1434 6,566 1462 6,631 1463 6,578 1481 8,601 1480 4,645 1496 8,648 1528 7,622 1513 6,767 1545 7,804 1553 8,832 1544 8,1015 1541 6,1050 1539 6,
132 1447 6,447 1442 10,503 1440 8,478 1427 5,430 1462 6,436 1493 10,439 1526 5,278 1532 9,252 1530 6,230 1546 6,208 1552 6,430 1060 5,431 1151 6,438 1195 5,470 1190 14,425 1255 6,15 1314 9,12 1359 6,208 1553 6,230 1547 6,1019 1563 6,1021 1593 8,1043 1610 4,959 1655 6,995 1653 7,985 1674 4,963 1686 5,976 1714 9,739 1735 5,707 1753 8,687 1785 5,711 1807 6,806 1805 6,824 1818 5,845 1789 6,854 1817 9,1024 1806 6,571 1844 8,600 1858 9,36 1692 7,52 1731 6,51 1856 6,93 1857 8,498 1831 7,486 1857 7,285 1855 6,
27 2071 9,58 2075 6,266 2126 8,274 2146 5,303 2146 8,382 2080 7,366 2094 6,444 2139 6,374 2146 6,4 2211 7,290 2276 6,4 2276 7,28 2278 6,1072 2030 14,890 2146 6,913 2146 7,814 2132 9,461 1873 6,487 1865 8,608 2272 5,950 1862 6,972 1864 7,600 2052 12,126 2045 5,450 2050 11`;

const draw = (d, transform) => {
  const path = document.createElementNS("http://www.w3.org/2000/svg", "path");
  path.setAttribute("d", d);
  if (transform) path.setAttribute("transform", transform);
  return path;
};

const wallpaper = document.querySelector(".wallpaper");
placed.split("|").forEach((entry) => {
  const [name, x, y, scale, turn] = entry.trim().split(" ");
  wallpaper.append(draw(shapes[name], `translate(${x} ${y}) rotate(${turn}) scale(${scale})`));
});
wallpaper.append(draw(rings.split(",").map((entry) => ring(...entry.trim().split(" ").map(Number))).join("")));

// Loudness samples of the voice message.
const levels = [35, 59, 60, 59, 59, 45, 51, 55, 55, 51, 45, 56, 37, 50, 61, 49, 61, 59, 59, 47, 51, 61, 61, 53, 26, 13, 59, 57, 54, 61, 50, 57, 57, 52, 59, 59, 53, 59, 43, 7];
document.querySelector(".wave").append(draw(levels.map((level, i) => `M${3 + i * 12} ${35 - level / 2}v${level - 6}`).join("")));
```
